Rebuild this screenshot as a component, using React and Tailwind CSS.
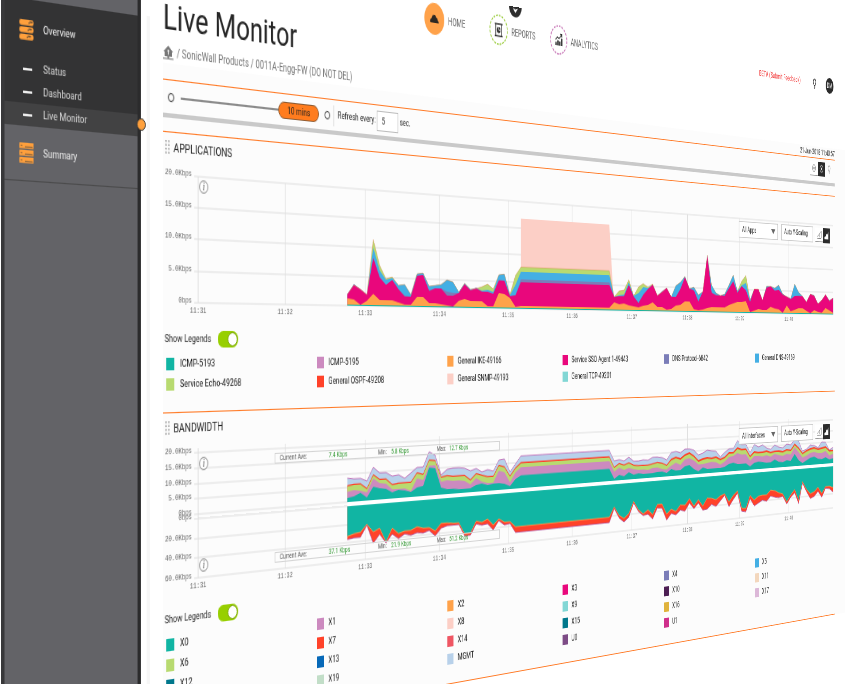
import React from "react";

const C = {
  teal: "#11b5a3",
  lilac: "#cc8abf",
  lime: "#b8da70",
  red: "#ff4229",
  orange: "#ffa24a",
  rose: "#fccfc6",
  magenta: "#e9077c",
  aqua: "#82d7d5",
  violet: "#7b7db8",
  sky: "#44afe4",
  pale: "#b8d1ea",
};

const PLOT_LEFT = 44;
const PLOT_RIGHT = 1192;
const MINUTE = 115.25;
const FIRST = 248;
const COUNT = 99;
const STEP = (PLOT_RIGHT - FIRST) / (COUNT - 1);

const px = (i) => FIRST + i * STEP;
const flat = (n, v) => Array(n).fill(v);

/* Application traffic, running totals in chart units (113 = 20 Kbps). */
const IKE = [7, 6, 1, 5, 12, 6, 6, 6, 4, 2, 2, 10, 10, 4, 4, 3, 2, 1, 7, 9, 7, 7, 7, 2, 2, 16, 15, 11, 2, ...flat(18, 3),
  9, 7, 8, 6, 5, 4, 6, 7, 10, 5, 5, 2, 3, 7, 8, 12, 12, 3, 2, 3, 5, 6, 6, 6, 6, 9, 11, 13, 13, 14, 1, 3, 5, 4, 4, 8, 6, 5, 1, 10, 3, 5, 7, 7, 4, 1, 5, 3, 2, 8, 5, 2];
const SSO = [11, 20, 16, 11, 47, 28, 21, 26, 17, 10, 10, 31, 32, 16, 19, 19, 12, 12, 15, 24, 18, 20, 17, 17, 15, 29, 29, 13, 14, ...flat(18, 28),
  15, 16, 16, 29, 16, 9, 18, 25, 30, 18, 22, 27, 17, 17, 26, 40, 27, 25, 12, 24, 66, 23, 20, 20, 20, 29, 37, 24, 32, 27, 13, 29, 29, 16, 31, 33, 28, 29, 23, 21, 18, 22, 22, 22, 15, 25, 23, 13, 18, 25, 17, 21];
const DNSP = SSO.map((v, i) => (i === 16 ? 16 : i === 17 ? 15 : i > 28 && i < 47 ? 31 : v + (i % 4 === 1 ? 1 : 0)));
const DNS = [11, 20, 16, 11, 57, 35, 26, 28, 21, 22, 12, 33, 34, 21, 22, 23, 28, 26, 16, 25, 19, 20, 18, 19, 17, 35, 36, 14, 25, ...flat(18, 39),
  15, 17, 18, 32, 17, 20, 27, 26, 30, 18, 22, 27, 17, 30, 34, 41, 27, 29, 20, 24, 67, 32, 23, 20, 22, 33, 45, 26, 33, 36, 16, 29, 29, 16, 33, 33, 31, 35, 24, 21, 19, 37, 27, 22, 15, 25, 23, 13, 18, 25, 17, 21];
const ECHO = DNS.map((v, i) => {
  const lifted = { 4: 65, 5: 40, 6: 27, 7: 29, 22: 22, 23: 25, 24: 20, 27: 15, 28: 35, 48: 22, 49: 23, 50: 35, 52: 27, 53: 31, 54: 27, 55: 31, 75: 38, 76: 45 };
  return i > 28 && i < 47 ? 44 : lifted[i] || v;
});

/* Interface traffic, downstream (above) and upstream (below), running totals. */
const D0 = [4, 5, 8, 3, 13, 11, 10, 6, 8, 7, 5, 9, 10, 28, 27, 7, 5, 5, 4, 4, 4, 7, 8, 6, 7, 7, 6, 3, 10, ...flat(18, 13.5),
  2, 6, 4, 8, 5, 6, 5, 5, 5, 6, 6, 4, 8, 6, 6, 10, 11, 6, 3, 7, 5, 5, 5, 5, 6, 9, 10, 8, 8, 8, 4, 8, 9, 8, 7, 7, 10, 7, 6, 8, 7, 15, 7, 3, 6, 9, 10, 7, 6, 8, 5, 6];
const D1 = [10, 11, 10, 8, 21, 16, 15, 9, 9, 9, 6, 18, 16, 30, 30, 13, 14, 13, 13, 12, 8, 14, 10, 8, 8, 20, 18, 7, 17, ...flat(18, 22),
  10, 14, 11, 13, 11, 10, 10, 9, 11, 11, 9, 8, 12, 15, 12, 18, 19, 16, 11, 11, 12, 13, 12, 9, 12, 17, 18, 21, 19, 19, 11, 16, 16, 15, 16, 14, 17, 15, 14, 16, 15, 23, 17, 10, 12, 15, 16, 14, 14, 16, 10, 12];
const D6 = [15, 16, 16, 11, 24, 19, 19, 13, 14, 14, 14, 23, 21, 35, 34, 17, 18, 17, 17, 17, 12, 18, 16, 14, 14, 25, 23, 13, 21, ...flat(18, 26),
  14, 18, 16, 18, 15, 14, 14, 14, 15, 16, 15, 12, 18, 20, 18, 22, 24, 20, 14, 16, 17, 16, 17, 14, 16, 21, 21, 26, 24, 24, 15, 20, 19, 19, 20, 18, 19, 19, 18, 20, 19, 26, 21, 14, 17, 19, 20, 18, 19, 20, 15, 15];
const D7 = D6.map((v, i) => v + (i > 28 && i < 47 ? 1.5 : i > 58 ? 2 : 1.3));
const DM = [23, 22, 22, 19, 32, 26, 26, 22, 23, 19, 24, 29, 29, 44, 40, 20, 25, 26, 26, 25, 22, 24, 20, 22, 20, 31, 32, 18, 26, ...flat(18, 34),
  22, 23, 21, 25, 20, 20, 21, 20, 23, 23, 22, 19, 27, 28, 26, 30, 30, 28, 22, 24, 27, 26, 25, 18, 23, 27, 27, 36, 31, 31, 21, 30, 27, 29, 25, 23, 28, 25, 24, 28, 27, 33, 31, 18, 20, 25, 24, 21, 28, 27, 17, 20];
const U0 = [29, 27, 26, 19, 27, 24, 38, 25, 31, 29, 29, 26, 28, 28, 32, 25, 25, 26, 26, 38, 38, 26, 28, 25, 32, 26, 30, 30, 36, ...flat(18, 36),
  25, 35, 39, 34, 21, 31, 36, 32, 38, 27, 27, 39, 34, 37, 30, 31, 24, 33, 26, 34, 25, 26, 28, 24, 22, 32, 25, 20, 41, 42, 27, 33, 29, 28, 28, 23, 24, 27, 29, 39, 31, 25, 39, 16, 26, 32, 30, 25, 33, 25, 25, 27];
const U7 = [32, 31, 31, 20, 38, 30, 39, 31, 36, 32, 34, 32, 33, 31, 37, 30, 28, 28, 28, 40, 40, 29, 31, 30, 37, 28, 33, 32, 42, ...flat(18, 42),
  27, 38, 43, 38, 23, 33, 38, 37, 43, 31, 32, 46, 39, 41, 36, 38, 29, 36, 30, 39, 38, 33, 36, 30, 24, 38, 30, 23, 45, 46, 31, 40, 37, 34, 36, 30, 32, 33, 32, 42, 34, 29, 43, 18, 29, 38, 36, 30, 38, 27, 28, 33];

const area = (values, base, dir = -1) =>
  `M${px(0)} ${base} ` + values.map((v, i) => `L${px(i).toFixed(1)} ${(base + dir * v).toFixed(1)}`).join(" ") + ` L${px(values.length - 1)} ${base}Z`;
const line = (values, base, dir = -1) =>
  values.map((v, i) => `${i ? "L" : "M"}${px(i).toFixed(1)} ${(base + dir * v).toFixed(1)}`).join(" ");

const TIMES = ["11:31", "11:32", "11:33", "11:34", "11:35", "11:36", "11:37", "11:38", "11:39", "11:40"];

function Grid({ rows, top, bottom }) {
  return (
    <g>
      <g stroke="#dedede" strokeWidth="1">
        {rows.map(([y], i) => (
          <line key={i} x1={PLOT_LEFT - 5} x2={PLOT_RIGHT} y1={y} y2={y} />
        ))}
        {TIMES.map((t, i) => (
          <line key={t} x1={PLOT_LEFT + i * MINUTE} x2={PLOT_LEFT + i * MINUTE} y1={top} y2={bottom} />
        ))}
      </g>
      <g fill="#666" fontSize="7" fontFamily='"Liberation Mono", monospace'>
        {rows.map(([y, label], i) => (
          <text key={i} x="36" y={y} textAnchor="end">
            {label}
          </text>
        ))}
        {TIMES.map((t, i) => (
          <text key={t} x={PLOT_LEFT + i * MINUTE} y={bottom + 9} textAnchor="middle">
            {t}
          </text>
        ))}
      </g>
    </g>
  );
}

function Info({ y }) {
  return (
    <g>
      <circle cx="51" cy={y} r="5.4" fill="#fff" stroke="#777" strokeWidth="0.9" />
      <text x="51" y={y + 3} textAnchor="middle" fontSize="10" fontStyle="italic" fill="#444" fontFamily='"Liberation Serif", serif'>
        i
      </text>
    </g>
  );
}

function AppsChart() {
  const base = 124;
  const rows = [[11, "20.0Kbps"], [39, "15.0Kbps"], [67, "10.0Kbps"], [96, "5.0Kbps"], [124, "0bps"]];
  return (
    <svg viewBox="0 0 1196 138" className="block h-auto w-full" role="img" aria-label="Applications traffic">
      <Grid rows={rows} top={11} bottom={base} />
      <Info y={20} />
      <path d={`M${px(29)} ${base} V${base - 95} H${px(46)} L${px(47)} ${base}Z`} fill={C.rose} />
      <path d={area(ECHO, base)} fill={C.lime} />
      <path d={area(DNS, base)} fill={C.sky} />
      <path d={area(DNSP, base)} fill={C.violet} />
      <path d={area(SSO, base)} fill={C.magenta} />
      <path d={area(IKE, base)} fill={C.orange} />
      <path d={line(ECHO, base)} fill="none" stroke="#e08a5a" strokeWidth="0.5" />
      <path d={area(flat(COUNT, 1), base)} fill={C.teal} />
    </svg>
  );
}

function BandwidthChart() {
  const up = 65;
  const low = 69;
  const rows = [
    [10, "20.0Kbps"], [24, "15.0Kbps"], [38, "10.0Kbps"], [51, "5.0Kbps"], [65, "0bps"],
    [69, "0bps"], [87, "20.0Kbps"], [104, "40.0Kbps"], [122, "60.0Kbps"],
  ];
  return (
    <svg viewBox="0 0 1196 138" className="block h-auto w-full" role="img" aria-label="Bandwidth traffic">
      <Grid rows={rows} top={6} bottom={122} />
      <Info y={20} />
      <Info y={111} />
      <path d={area(DM, up)} fill={C.pale} />
      <path d={area(D7, up)} fill={C.red} />
      <path d={area(D6, up)} fill={C.lime} />
      <path d={area(D1, up)} fill={C.lilac} />
      <path d={area(D0, up)} fill={C.teal} />
      <path d={line(DM, up)} fill="none" stroke="#c05cae" strokeWidth="0.8" />
      <path d={area(U7, low, 1)} fill={C.red} />
      <path d={area(U0, low, 1)} fill={C.teal} />
      <path d={line(U0, low, 1)} fill="none" stroke={C.orange} strokeWidth="0.8" />
      <path d={line(U7, low, 1)} fill="none" stroke="#b04a9c" strokeWidth="0.8" />
      <rect x={FIRST} y={up} width={PLOT_RIGHT - FIRST} height={low - up} fill="#fff" />
    </svg>
  );
}

function Stats({ current, min, max, place }) {
  return (
    <dl className={`absolute left-[145px] flex h-[10px] w-[346px] items-center border border-[#d4d4d4] text-[7px] leading-none text-[#555] ${place}`}>
      <dt className="ml-1.5 w-[69px]">Current Ave:</dt>
      <dd className="w-[73px] text-[#2f962f]">{current}</dd>
      <dt className="w-5">Min:</dt>
      <dd className="w-[72px] text-[#2f962f]">{min}</dd>
      <dt className="w-5">Max:</dt>
      <dd className="text-[#2f962f]">{max}</dd>
    </dl>
  );
}

function ChartControls({ label }) {
  return (
    <div className="absolute top-[14px] right-3 flex h-5 items-center text-[9px] text-[#222]">
      <span className="relative mr-2 block h-full">
        <select aria-label={label} className="h-full w-[91px] appearance-none border border-[#c4c4c4] bg-white pl-1.5 leading-none">
          <option>{label}</option>
        </select>
        <svg viewBox="0 0 10 6" className="pointer-events-none absolute top-[7px] right-1.5 h-1.5 w-[10px] fill-[#666]">
          <path d="M0 0h10L5 6z" />
        </svg>
      </span>
      <button className="mr-1.5 h-full w-[78px] border border-[#c4c4c4] bg-white pl-1.5 text-left whitespace-nowrap">Auto Y-Scaling</button>
      <button aria-label="Line view" className="flex h-[18px] w-[19px] items-center justify-center border-b border-[#999] bg-white">
        <svg viewBox="0 0 12 12" className="h-3 w-3 fill-none stroke-[#888]">
          <path d="M1 8.5 11 1v9M1 10.5h10M6 5v4" />
        </svg>
      </button>
      <button aria-label="Area view" className="flex h-[19px] w-[18px] items-center justify-center bg-[#2c2c2c]">
        <svg viewBox="0 0 12 12" className="h-3 w-3 fill-white">
          <path d="M1 11V8l4-1V4l3 1 3-4v10z" />
        </svg>
      </button>
    </div>
  );
}

function LegendToggle({ id }) {
  return (
    <label htmlFor={id} className="mt-[10px] flex h-4 items-center gap-2 pl-0.5 text-[9px] leading-4 text-[#222]">
      Show Legends
      <input id={id} type="checkbox" defaultChecked className="peer sr-only" />
      <span className="flex h-[15px] w-[27px] items-center justify-end rounded-full bg-[#97cf00] px-px">
        <span className="h-[13px] w-[13px] rounded-full border border-[#75a000] bg-white" />
      </span>
    </label>
  );
}

function Legend({ items }) {
  return (
    <ul className="mt-[5px] grid auto-rows-[18px] grid-cols-6 text-[9px] leading-none text-[#111]">
      {items.map(([name, color]) => (
        <li key={name} className="flex items-center gap-[7px] pl-1">
          <span className="h-[11px] w-[10px]" style={{ backgroundColor: color }} />
          {name}
        </li>
      ))}
    </ul>
  );
}

function PanelTitle({ children }) {
  return (
    <div className="flex h-[26px] items-center gap-[5px] pl-[3px]">
      <svg viewBox="0 0 5 12" className="h-3 w-[5px] fill-[#888]">
        {[0, 3.4, 6.8, 10.2].map((y) => (
          <g key={y}>
            <rect x="0" y={y} width="1.5" height="1.5" />
            <rect x="3.5" y={y} width="1.5" height="1.5" />
          </g>
        ))}
      </svg>
      <h2 className="text-[11px] leading-none text-[#222]">{children}</h2>
    </div>
  );
}

function StackIcon({ slanted }) {
  return (
    <svg viewBox="0 0 16 17" className="h-[17px] w-4">
      {[0, 6, 12].map((y, i) => (
        <g key={y}>
          <rect x="0" y={y} width="15.5" height="4.8" rx={slanted ? 1.8 : 0.4} fill="#ffa03c" />
          {slanted ? (
            <path d={`M${10 - i} ${y + 3.2}l1.5-1.4h3`} stroke="#333" strokeWidth="1" fill="none" />
          ) : (
            <path d={`M1.5 ${y + 2.4}h1.8M6 ${y + 3.4}h8.5`} stroke="#7a5c3c" strokeWidth="0.8" />
          )}
        </g>
      ))}
    </svg>
  );
}

function Bulb({ small }) {
  return (
    <svg viewBox="0 0 8 13" className={small ? "h-[11px] w-2" : "h-[13px] w-2"} fill="none" stroke={small ? "#666" : "#222"} strokeWidth={small ? 0.8 : 1.2}>
      <path d="M2.6 8.6C2.6 7 .8 6.4.8 4a3.2 3.2 0 0 1 6.4 0c0 2.4-1.8 3-1.8 4.6zM2.6 10.5h2.8M3.2 12.2h1.6" />
    </svg>
  );
}

function Sidebar() {
  const links = ["Status", "Dashboard", "Live Monitor"];
  return (
    <aside className="relative w-[159px] shrink-0 border-x-4 border-[#38383a] border-r-[#2b2b2c] bg-[#636367] pt-[68px] text-[9px] text-[#dcdcdc]">
      <nav>
        <div className="bg-[#333334] pt-4">
          <a href="#overview" className="flex h-[18px] items-center gap-[10px] pl-4 text-[#f4f4f4]">
            <StackIcon slanted />
            Overview
          </a>
          <ul className="mt-[14px]">
            {links.map((name) => (
              <li key={name} className={name === "Live Monitor" ? "bg-[#424243]" : ""}>
                <a href={`#${name}`} className="flex h-[19px] items-center gap-3 pl-5">
                  <span className="h-0.5 w-[10px] bg-[#ededed]" />
                  {name}
                </a>
              </li>
            ))}
          </ul>
        </div>
        <a href="#summary" className="flex h-[46px] items-center gap-[10px] border-b border-[#4b4b4c] pl-4 text-[#ececec]">
          <StackIcon />
          Summary
        </a>
      </nav>
      <button aria-label="Collapse sidebar" className="absolute top-[157px] -right-[10px] h-[11px] w-[11px] rounded-full border border-[#333] bg-[#ffa03c]" />
    </aside>
  );
}

function NavItem({ name, fill = "none", ring = "none", children }) {
  return (
    <a href={`#${name}`} className="flex w-[107px] items-center gap-1.5">
      <svg viewBox="0 0 32 32" className="h-8 w-8">
        <circle cx="16" cy="16" r={ring === "none" ? 16 : 15} fill={fill} stroke={ring} strokeWidth="1.5" strokeDasharray="3 1.7" />
        {children}
      </svg>
      {name}
    </a>
  );
}

function Header() {
  return (
    <header>
      <div className="relative flex h-[34px] items-center pl-[366px] text-[10px] text-[#666]">
        <nav className="flex">
          <NavItem name="HOME" fill="#ffa24a">
            <path d="M9.5 20C8.6 18 9.5 16.2 11.5 15.8c.3-2 1.8-3.8 3.5-3.6 1.8-.8 3.6.4 3.8 2.3 2 .1 2.7 1.5 2.4 2.7 1.8.4 1.900 2 1.400 2.800z" fill="#2d2823" />
          </NavItem>
          <NavItem name="REPORTS" ring="#9fce45">
            <g fill="none" stroke="#333" strokeWidth="1.3">
              <path d="M11 10h10v12.500H11zM9.300 10h13.400M9.300 22.500h13.400" />
              <circle cx="16" cy="16.2" r="3.2" fill="#333" stroke="none" />
              <path d="M16 16.200h3.200M16 16.200V13" stroke="#fff" strokeWidth="0.9" />
            </g>
          </NavItem>
          <NavItem name="ANALYTICS" ring="#c774b5">
            <g fill="none" stroke="#333">
              <path d="M11 22V18.500M14.500 22v-5.500M18 22v-4.500M21.400 22v-8" strokeWidth="2.6" />
              <path d="M10 16 13.500 13l3 1.600L21.500 10M18 9.700h3.700V13" strokeWidth="1.2" />
            </g>
          </NavItem>
        </nav>
        <svg viewBox="0 0 22 11" className="absolute -top-[10px] left-[507px] h-[11px] w-[22px]">
          <path d="M0 0h22a11 11 0 0 1-22 0z" fill="#2d2d2d" />
          <path d="M6.500 1.500 11 2.800l4.500-1.300L11 6.500z" fill="#fff" />
        </svg>
        <div className="ml-auto flex items-center">
          <a href="#feedback" className="mr-[31px] text-[9px] whitespace-nowrap text-[#f01818]">BETA (Submit Feedback)</a>
          <button aria-label="Tips" className="mr-6">
            <Bulb />
          </button>
          <button className="mr-[3px] h-5 w-5 rounded-full bg-[#2b2b2b] text-[9px] leading-5 text-white">DM</button>
        </div>
      </div>
      <h1 className="my-[5px] text-[32px] leading-8 text-[#262626]">Live Monitor</h1>
      <nav aria-label="Breadcrumb" className="flex h-5 items-center gap-1 text-[10px] text-[#757575]">
        <svg viewBox="0 0 13 13" className="h-[13px] w-[13px]">
          <path d="M6.500.5 12.500 6H11v4H7.500v1.500H13v1H0v-1h5.500V10H2V6H.5z" fill="#777" />
          <path d="M5.500 5a1 1 0 0 1 2 0L7 6.500v2H6v-2z" fill="#fff" />
        </svg>
        <p className="whitespace-nowrap">/ SonicWall Products / 0011A-Engg-FW (DO NOT DEL)</p>
      </nav>
    </header>
  );
}

function Toolbar() {
  return (
    <>
      <p className="h-[14px] text-right text-[9px] leading-[14px] text-[#222]">21-Jun-2018 11:40:57</p>
      <div className="flex h-[34px] items-center border-t border-b-4 border-t-[#ff7a26] border-b-[#c9c9c9] text-[9px] text-[#222]">
        <div className="relative ml-1.5 flex items-center">
          <span className="h-2 w-2 rounded-full border border-[#333]" />
          <span className="ml-2 h-0.5 w-32 bg-[#8c8c8c]" />
          <span className="h-4 w-[57px] rounded-full border border-[#8a5a33] bg-[#ff7c1e] text-center leading-[14px]">10 mins</span>
          <span className="ml-2 h-2 w-2 rounded-full border border-[#333]" />
          <input type="range" aria-label="Time window" defaultValue="100" className="absolute inset-0 w-full opacity-0" />
        </div>
        <span className="ml-[5px] h-5 border-l border-[#ccc]" />
        <label htmlFor="refresh" className="ml-[5px] whitespace-nowrap">Refresh every:</label>
        <input id="refresh" defaultValue="5" className="mx-0.5 h-5 w-[33px] border border-[#bbb] bg-white pl-1.5 outline-none" />
        <span>sec.</span>
        <div className="mr-1 mb-1 ml-auto flex items-center">
          <button aria-label="Light view" className="flex h-[18px] w-[19px] items-center justify-center border-b border-[#999] bg-white">
            <svg viewBox="0 0 12 12" className="h-[11px] w-[11px]" fill="none" stroke="#777">
              <circle cx="6" cy="6" r="4.5" />
              <circle cx="6" cy="6" r="1.5" />
            </svg>
          </button>
          <button aria-label="Dark view" className="flex h-[18px] w-[19px] items-center justify-center bg-[#2b2b2b]">
            <svg viewBox="0 0 12 12" className="h-[11px] w-[11px]" fill="none" stroke="#fff">
              <circle cx="6" cy="6" r="4.5" />
              <circle cx="6" cy="6" r="1.2" fill="#fff" />
            </svg>
          </button>
          <button aria-label="Hints" className="mr-1.5 ml-1.5">
            <Bulb small />
          </button>
        </div>
      </div>
    </>
  );
}

const APP_LEGEND = [
  ["ICMP-5193", C.teal], ["ICMP-5195", C.lilac], ["General IKE-49166", C.orange], ["Service SSO Agent 1-49443", C.magenta],
  ["DNS Protocol-6842", C.violet], ["General DNS-49169", C.sky], ["Service Echo-49268", C.lime], ["General OSPF-49208", C.red],
  ["General SNMP-49193", C.rose], ["General TCP-49201", C.aqua],
];

const PORT_LEGEND = [
  ["X0", C.teal], ["X1", C.lilac], ["X2", C.orange], ["X3", C.magenta], ["X4", C.violet], ["X5", C.sky],
  ["X6", C.lime], ["X7", C.red], ["X8", C.rose], ["X9", C.aqua], ["X10", "#4d1f54"], ["X11", "#f3d7bd"],
  ["X12", "#00778c"], ["X13", "#0769b8"], ["X14", "#ef5663"], ["X15", "#00788c"], ["X16", "#e0b33c"], ["X17", "#dcb8d8"],
  ["X18", "#c9c9c9"], ["X19", "#c2dec8"], ["MGMT", C.pale], ["U0", "#7d4c86"], ["U1", "#cf2f8b"],
];

export default function App() {
  return (
    <div className="h-screen overflow-hidden bg-white perspective-[2366px] perspective-origin-[50%_342px] [font-family:Roboto,'Open_Sans',sans-serif]">
      <div className="-mt-[10px] -ml-[127px] flex min-h-[830px] w-[167%] origin-[39%_0] rotate-y-51">
        <Sidebar />
        <div className="mt-[67px] ml-[7px] w-1 shrink-0 bg-[#f6f6f6]" />
        <main className="min-w-0 flex-1 pt-[10px]">
          <div className="pr-7 pl-4">
            <Header />
          </div>
          <div className="ml-4 bg-[#fcfcfc] pr-7">
            <Toolbar />
            <section className="mt-3 border-t border-[#ff7a26] pb-4">
              <PanelTitle>APPLICATIONS</PanelTitle>
              <div className="relative">
                <AppsChart />
                <ChartControls label="All Apps" />
              </div>
              <LegendToggle id="apps-legend" />
              <Legend items={APP_LEGEND} />
            </section>
            <section className="border-y border-[#ff7a26] pb-4">
              <PanelTitle>BANDWIDTH</PanelTitle>
              <div className="relative">
                <BandwidthChart />
                <Stats place="top-[14px]" current="7.4 Kbps" min="5.8 Kbps" max="12.7 Kbps" />
                <Stats place="top-[106px]" current="37.1 Kbps" min="21.9 Kbps" max="51.2 Kbps" />
                <ChartControls label="All Interfaces" />
              </div>
              <LegendToggle id="ports-legend" />
              <Legend items={PORT_LEGEND} />
            </section>
          </div>
        </main>
      </div>
    </div>
  );
}
